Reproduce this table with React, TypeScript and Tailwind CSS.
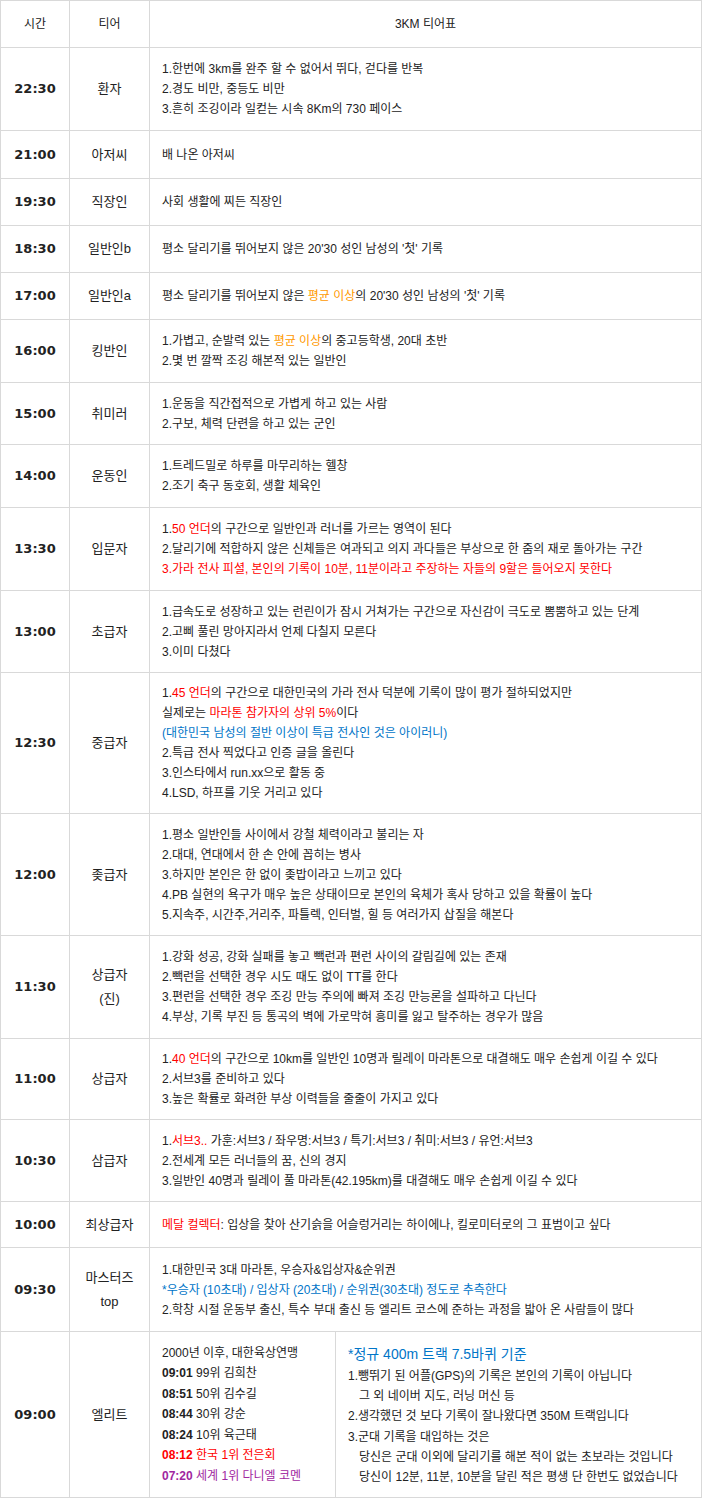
import React from 'react';

type Seg = string | { t: string; c: string };
type Row = { time: string; tier: string[]; lines: Seg[][]; h: string };

const R = 'text-[#ff0000]';
const O = 'text-[#ff9900]';
const B = 'text-[#0075c8]';
const P = 'text-[#a0279f]';

const rows: Row[] = [
  {
    time: '22:30',
    tier: ['환자'],
    h: 'h-[83px]',
    lines: [
      ['1.한번에 3km를 완주 할 수 없어서 뛰다, 걷다를 반복'],
      ['2.경도 비만, 중등도 비만'],
      ['3.흔히 조깅이라 일컫는 시속 8Km의 730 페이스'],
    ],
  },
  { time: '21:00', tier: ['아저씨'], h: 'h-[48px]', lines: [['배 나온 아저씨']] },
  { time: '19:30', tier: ['직장인'], h: 'h-[47px]', lines: [['사회 생활에 찌든 직장인']] },
  {
    time: '18:30',
    tier: ['일반인b'],
    h: 'h-[47px]',
    lines: [["평소 달리기를 뛰어보지 않은 20'30 성인 남성의 '첫' 기록"]],
  },
  {
    time: '17:00',
    tier: ['일반인a'],
    h: 'h-[47px]',
    lines: [['평소 달리기를 뛰어보지 않은 ', { t: '평균 이상', c: O }, "의 20'30 성인 남성의 '첫' 기록"]],
  },
  {
    time: '16:00',
    tier: ['킹반인'],
    h: 'h-[63px]',
    lines: [
      ['1.가볍고, 순발력 있는 ', { t: '평균 이상', c: O }, '의 중고등학생, 20대 초반'],
      ['2.몇 번 깔짝 조깅 해본적 있는 일반인'],
    ],
  },
  {
    time: '15:00',
    tier: ['취미러'],
    h: 'h-[62px]',
    lines: [['1.운동을 직간접적으로 가볍게 하고 있는 사람'], ['2.구보, 체력 단련을 하고 있는 군인']],
  },
  {
    time: '14:00',
    tier: ['운동인'],
    h: 'h-[63px]',
    lines: [['1.트레드밀로 하루를 마무리하는 헬창'], ['2.조기 축구 동호회, 생활 체육인']],
  },
  {
    time: '13:30',
    tier: ['입문자'],
    h: 'h-[83px]',
    lines: [
      ['1.', { t: '50 언더', c: R }, '의 구간으로 일반인과 러너를 가르는 영역이 된다'],
      ['2.달리기에 적합하지 않은 신체들은 여과되고 의지 과다들은 부상으로 한 줌의 재로 돌아가는 구간'],
      [{ t: '3.가라 전사 피셜, 본인의 기록이 10분, 11분이라고 주장하는 자들의 9할은 들어오지 못한다', c: R }],
    ],
  },
  {
    time: '13:00',
    tier: ['초급자'],
    h: 'h-[82px]',
    lines: [
      ['1.급속도로 성장하고 있는 런린이가 잠시 거쳐가는 구간으로 자신감이 극도로 뽐뿜하고 있는 단계'],
      ['2.고삐 풀린 망아지라서 언제 다칠지 모른다'],
      ['3.이미 다쳤다'],
    ],
  },
  {
    time: '12:30',
    tier: ['중급자'],
    h: 'h-[141px]',
    lines: [
      ['1.', { t: '45 언더', c: R }, '의 구간으로 대한민국의 가라 전사 덕분에 기록이 많이 평가 절하되었지만'],
      ['실제로는 ', { t: '마라톤 참가자의 상위 5%', c: R }, '이다'],
      [{ t: '(대한민국 남성의 절반 이상이 특급 전사인 것은 아이러니)', c: B }],
      ['2.특급 전사 찍었다고 인증 글을 올린다'],
      ['3.인스타에서 run.xx으로 활동 중'],
      ['4.LSD, 하프를 기웃 거리고 있다'],
    ],
  },
  {
    time: '12:00',
    tier: ['좆급자'],
    h: 'h-[122px]',
    lines: [
      ['1.평소 일반인들 사이에서 강철 체력이라고 불리는 자'],
      ['2.대대, 연대에서 한 손 안에 꼽히는 병사'],
      ['3.하지만 본인은 한 없이 좆밥이라고 느끼고 있다'],
      ['4.PB 실현의 욕구가 매우 높은 상태이므로 본인의 육체가 혹사 당하고 있을 확률이 높다'],
      ['5.지속주, 시간주,거리주, 파틀렉, 인터벌, 힐 등 여러가지 삽질을 해본다'],
    ],
  },
  {
    time: '11:30',
    tier: ['상급자', '(진)'],
    h: 'h-[103px]',
    lines: [
      ['1.강화 성공, 강화 실패를 놓고 빽런과 편런 사이의 갈림길에 있는 존재'],
      ['2.빽런을 선택한 경우 시도 때도 없이 TT를 한다'],
      ['3.편런을 선택한 경우 조깅 만능 주의에 빠져 조깅 만능론을 설파하고 다닌다'],
      ['4.부상, 기록 부진 등 통곡의 벽에 가로막혀 흥미를 잃고 탈주하는 경우가 많음'],
    ],
  },
  {
    time: '11:00',
    tier: ['상급자'],
    h: 'h-[81px]',
    lines: [
      ['1.', { t: '40 언더', c: R }, '의 구간으로 10km를 일반인 10명과 릴레이 마라톤으로 대결해도 매우 손쉽게 이길 수 있다'],
      ['2.서브3를 준비하고 있다'],
      ['3.높은 확률로 화려한 부상 이력들을 줄줄이 가지고 있다'],
    ],
  },
  {
    time: '10:30',
    tier: ['삼급자'],
    h: 'h-[82px]',
    lines: [
      ['1.', { t: '서브3..', c: R }, ' 가훈:서브3 / 좌우명:서브3 / 특기:서브3 / 취미:서브3 / 유언:서브3'],
      ['2.전세계 모든 러너들의 꿈, 신의 경지'],
      ['3.일반인 40명과 릴레이 풀 마라톤(42.195km)를 대결해도 매우 손쉽게 이길 수 있다'],
    ],
  },
  {
    time: '10:00',
    tier: ['최상급자'],
    h: 'h-[46px]',
    lines: [[{ t: '메달 컬렉터', c: R }, ': 입상을 찾아 산기슭을 어슬렁거리는 하이에나, 킬로미터로의 그 표범이고 싶다']],
  },
  {
    time: '09:30',
    tier: ['마스터즈', 'top'],
    h: 'h-[84px]',
    lines: [
      ['1.대한민국 3대 마라톤, 우승자&입상자&순위권'],
      [{ t: '*우승자 (10초대) / 입상자 (20초대) / 순위권(30초대) 정도로 추측한다', c: B }],
      ['2.학창 시절 운동부 출신, 특수 부대 출신 등 엘리트 코스에 준하는 과정을 밟아 온 사람들이 많다'],
    ],
  },
];

const records = [
  { t: '09:01', n: '99위 김희찬', c: '' },
  { t: '08:51', n: '50위 김수길', c: '' },
  { t: '08:44', n: '30위 강순', c: '' },
  { t: '08:24', n: '10위 육근태', c: '' },
  { t: '08:12', n: '한국 1위 전은회', c: R },
  { t: '07:20', n: '세계 1위 다니엘 코멘', c: P },
];

const cell = 'border border-[#d9d9d9]';
const body = "font-['Liberation_Sans','Noto_Sans_CJK_KR',sans-serif]";
const timeFont = "font-['DejaVu_Sans',sans-serif] font-bold text-[13px]";

const Line: React.FC<{ segs: Seg[] }> = ({ segs }) => (
  <div className="whitespace-nowrap">
    {segs.map((s, i) =>
      typeof s === 'string' ? <span key={i}>{s}</span> : <span key={i} className={s.c}>{s.t}</span>
    )}
  </div>
);

const App: React.FC = () => {
  return (
    <div className={`w-[702px] bg-white text-[#222] text-[12px] ${body}`}>
      <table className="w-[702px] table-fixed border-collapse">
        <colgroup>
          <col className="w-[69px]" />
          <col className="w-[80px]" />
          <col />
        </colgroup>
        <tbody>
          <tr className="h-[47px]">
            <td className={`${cell} text-center`}>시간</td>
            <td className={`${cell} text-center`}>티어</td>
            <td className={`${cell} text-center`}>3KM 티어표</td>
          </tr>
          {rows.map((r) => (
            <tr key={r.time} className={r.h}>
              <td className={`${cell} text-center align-middle ${timeFont}`}>{r.time}</td>
              <td className={`${cell} text-center align-middle text-[13px] leading-[24px]`}>
                {r.tier.map((t) => (
                  <div key={t}>{t}</div>
                ))}
              </td>
              <td className={`${cell} px-[12px] align-middle leading-[20px]`}>
                {r.lines.map((l, i) => (
                  <Line key={i} segs={l} />
                ))}
              </td>
            </tr>
          ))}
          <tr className="h-[166px]">
            <td className={`${cell} text-center align-middle ${timeFont}`}>09:00</td>
            <td className={`${cell} text-center align-middle text-[13px]`}>엘리트</td>
            <td className={`${cell} p-0`}>
              <div className="flex h-[165px]">
                <div className="w-[186px] shrink-0 flex flex-col justify-center px-[12px] leading-[20.4px] border-r border-[#d9d9d9]">
                  <div className="whitespace-nowrap">2000년 이후, 대한육상연맹</div>
                  {records.map((r) => (
                    <div key={r.t} className={`whitespace-nowrap ${r.c}`}>
                      <span className="font-bold">{r.t}</span> {r.n}
                    </div>
                  ))}
                </div>
                <div className="flex-1 flex flex-col justify-center px-[12px] leading-[20.2px]">
                  <div className={`whitespace-nowrap text-[14px] leading-[24px] ${B}`}>*정규 400m 트랙 7.5바퀴 기준</div>
                  <div className="whitespace-nowrap">1.뺑뛰기 된 어플(GPS)의 기록은 본인의 기록이 아닙니다</div>
                  <div className="whitespace-nowrap pl-[11px]">그 외 네이버 지도, 러닝 머신 등</div>
                  <div className="whitespace-nowrap">2.생각했던 것 보다 기록이 잘나왔다면 350M 트랙입니다</div>
                  <div className="whitespace-nowrap">3.군대 기록을 대입하는 것은</div>
                  <div className="whitespace-nowrap pl-[11px]">당신은 군대 이외에 달리기를 해본 적이 없는 초보라는 것입니다</div>
                  <div className="whitespace-nowrap pl-[11px]">당신이 12분, 11분, 10분을 달린 적은 평생 단 한번도 없었습니다</div>
                </div>
              </div>
            </td>
          </tr>
        </tbody>
      </table>
    </div>
  );
};

export default App;
